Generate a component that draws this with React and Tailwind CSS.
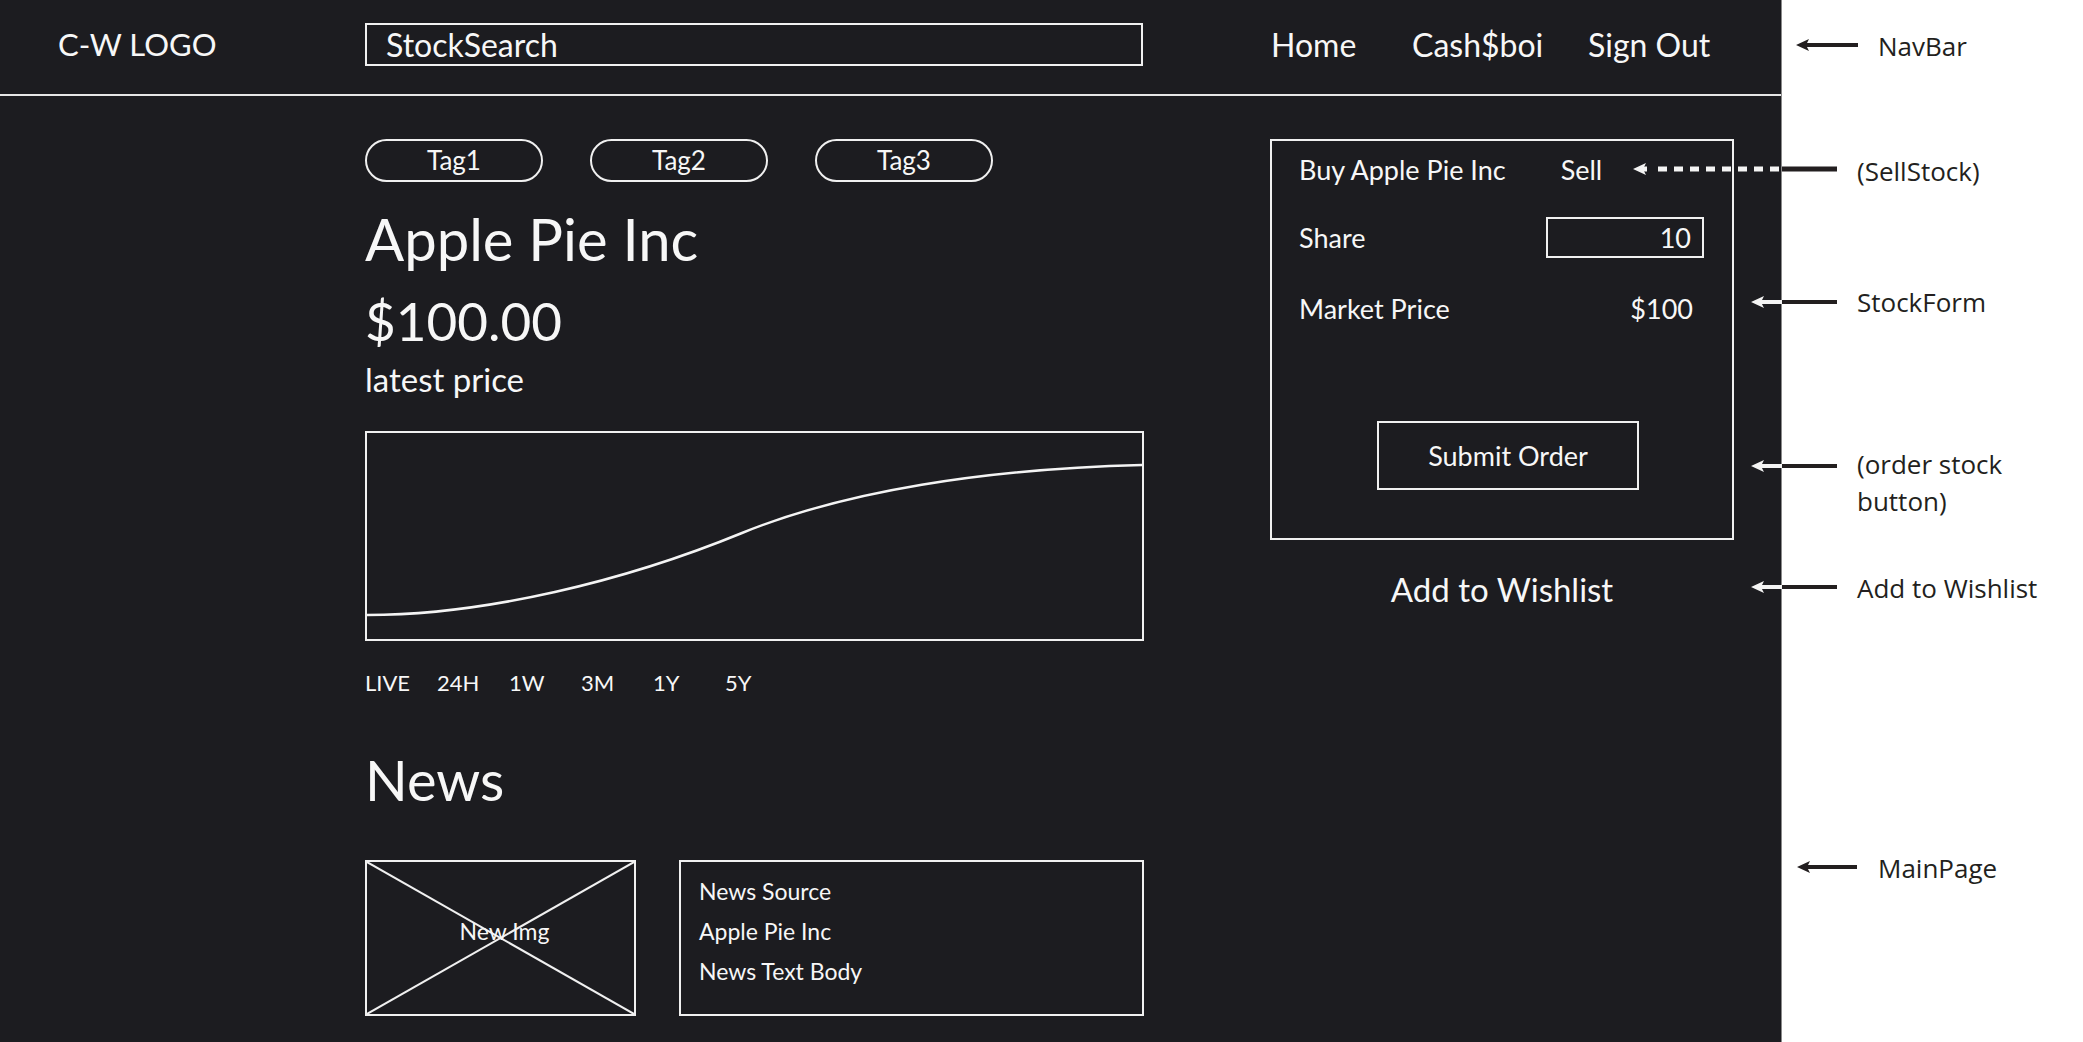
import React from 'react';

const tags = ['Tag1', 'Tag2', 'Tag3'];
const ranges = ['LIVE', '24H', '1W', '3M', '1Y', '5Y'];

function NavBar() {
    return (
        <nav className="h-[96px] border-b-2 border-[#e6e6e6] flex items-center pb-[5px]">
            <div className="w-[365px] pl-[58px] text-[31px] leading-none">C-W LOGO</div>
            <div className="w-[778px] h-[43px] border-2 border-[#f0f0f0] flex items-center pl-[19px] text-[32px] leading-none">
                StockSearch
            </div>
            <div className="ml-[128px] flex items-center text-[32px] leading-none">
                <span className="w-[141px]">Home</span>
                <span className="w-[176px]">Cash$boi</span>
                <span>Sign Out</span>
            </div>
        </nav>
    );
}

function PriceChart() {
    return (
        <div className="mt-[35px] w-[779px] h-[210px] border-2 border-[#f0f0f0]">
            <svg className="w-full h-full" viewBox="0 0 775 206" preserveAspectRatio="none">
                <path
                    d="M0,182 C118,182 258,148 375,100 C478,58 618,36 775,32"
                    fill="none"
                    stroke="#f4f4f4"
                    strokeWidth="2.5"
                />
            </svg>
        </div>
    );
}

function NewsCard() {
    return (
        <div className="mt-[52px] flex">
            <div className="relative w-[271px] h-[156px] border-2 border-[#f0f0f0] flex items-center justify-center">
                <svg className="absolute inset-0 w-full h-full" viewBox="0 0 267 152" preserveAspectRatio="none">
                    <line x1="0" y1="0" x2="267" y2="152" stroke="#f0f0f0" strokeWidth="2" />
                    <line x1="267" y1="0" x2="0" y2="152" stroke="#f0f0f0" strokeWidth="2" />
                </svg>
                <span className="relative text-[23px] leading-none -mt-[14px] ml-[8px]">New Img</span>
            </div>
            <div className="ml-[43px] w-[465px] h-[156px] border-2 border-[#f0f0f0] pl-[18px] pt-[9px] text-[23px] leading-[40px]">
                <div>News Source</div>
                <div>Apple Pie Inc</div>
                <div>News Text Body</div>
            </div>
        </div>
    );
}

function StockForm() {
    return (
        <div className="w-[464px]">
            <div className="h-[401px] border-2 border-[#f0f0f0] pl-[27px] pr-[28px] pt-[15px] text-[27px] leading-none">
                <div className="flex">
                    <span>Buy Apple Pie Inc</span>
                    <span className="ml-[55px]">Sell</span>
                </div>
                <div className="mt-[34px] flex items-center justify-between">
                    <span>Share</span>
                    <div className="w-[158px] h-[41px] border-2 border-[#f0f0f0] flex items-center justify-end pr-[11px]">10</div>
                </div>
                <div className="mt-[37px] flex justify-between pr-[11px]">
                    <span>Market Price</span>
                    <span>$100</span>
                </div>
                <button className="mt-[99px] ml-[78px] w-[262px] h-[69px] border-2 border-[#f0f0f0] flex items-center justify-center text-[27px] leading-none">
                    Submit Order
                </button>
            </div>
            <div className="mt-[33px] text-center text-[33px] leading-none">Add to Wishlist</div>
        </div>
    );
}

function Arrows() {
    const white = '#f4f4f4';
    const black = '#231f20';
    const head = (x, y, c) => (
        <polygon points={`${x},${y} ${x + 13},${y - 6} ${x + 10},${y} ${x + 13},${y + 6}`} fill={c} />
    );
    return (
        <svg className="absolute inset-0 pointer-events-none" width="2083" height="1042">
            {/* NavBar */}
            <line x1="1805" y1="45" x2="1858" y2="45" stroke={black} strokeWidth="4" />
            {head(1796, 45, black)}
            {/* SellStock */}
            <line x1="1658" y1="169" x2="1782" y2="169" stroke={white} strokeWidth="5" strokeDasharray="9 7" />
            <line x1="1642" y1="169" x2="1647" y2="169" stroke={white} strokeWidth="5" />
            {head(1633, 169, white)}
            <line x1="1782" y1="169" x2="1837" y2="169" stroke={black} strokeWidth="5" />
            {/* StockForm, order button, wishlist */}
            {[302, 466, 587].map((y) => (
                <g key={y}>
                    <line x1="1760" y1={y} x2="1782" y2={y} stroke={white} strokeWidth="4" />
                    {head(1751, y, white)}
                    <line x1="1782" y1={y} x2="1837" y2={y} stroke={black} strokeWidth="4" />
                </g>
            ))}
            {/* MainPage */}
            <line x1="1806" y1="867" x2="1857" y2="867" stroke={black} strokeWidth="4" />
            {head(1797, 867, black)}
        </svg>
    );
}

function Notes() {
    return (
        <div className="relative flex-1 h-full font-['Open_Sans',sans-serif] text-[26px] text-[#231f20]">
            <div className="absolute left-[96px] top-[33px] leading-none">NavBar</div>
            <div className="absolute left-[75px] top-[158px] leading-none">(SellStock)</div>
            <div className="absolute left-[75px] top-[289px] leading-none">StockForm</div>
            <div className="absolute left-[75px] top-[446px] leading-[37px]">
                <div>(order stock</div>
                <div>button)</div>
            </div>
            <div className="absolute left-[75px] top-[575px] leading-none">Add to Wishlist</div>
            <div className="absolute left-[96px] top-[855px] leading-none">MainPage</div>
        </div>
    );
}

export default function App() {
    return (
        <div className="relative flex w-[2083px] h-[1042px] bg-white overflow-hidden">
            <div className="w-[1782px] h-full bg-[#1c1c20] text-[#f7f7f7] font-['Lato',sans-serif] border-r border-[#8a8a8a]">
                <NavBar />
                <main className="flex pl-[365px] pt-[43px]">
                    <section className="w-[779px]">
                        <div className="flex gap-[47px]">
                            {tags.map((tag) => (
                                <div key={tag} className="w-[178px] h-[43px] rounded-full border-2 border-[#f0f0f0] flex items-center justify-center text-[26px] leading-none pb-[2px]">
                                    {tag}
                                </div>
                            ))}
                        </div>
                        <h1 className="mt-[28px] text-[58px] leading-none">Apple Pie Inc</h1>
                        <div className="mt-[26px] text-[53px] leading-none">$100.00</div>
                        <div className="mt-[16px] text-[33px] leading-none">latest price</div>
                        <PriceChart />
                        <div className="mt-[31px] flex text-[22px] leading-none">
                            {ranges.map((r) => (
                                <span key={r} className="w-[72px]">{r}</span>
                            ))}
                        </div>
                        <h2 className="mt-[58px] text-[56px] leading-none">News</h2>
                        <NewsCard />
                    </section>
                    <aside className="ml-[126px]">
                        <StockForm />
                    </aside>
                </main>
            </div>
            <Notes />
            <Arrows />
        </div>
    );
}
